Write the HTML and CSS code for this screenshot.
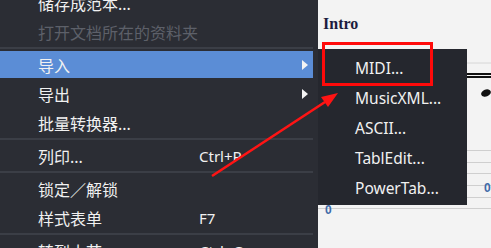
FILE: index.html
```html
<!DOCTYPE html>
<html lang="zh-CN">

<head>
    <meta charset="UTF-8" />
    <meta name="viewport" content="width=device-width, initial-scale=1.0" />
    <title>导入菜单</title>
    <link rel="stylesheet" href="styles.css">
</head>

<body>

    <div class="window">
        <div class="menu">
            <ul class="menu-list">
                <li class="item">储存成范本...</li>
                <li class="item disabled">打开文档所在的资料夹</li>
                <li class="sep"></li>
                <li class="item active"><span>导入</span><span></span><span class="sub-arrow"></span></li>
                <li class="item"><span>导出</span><span></span><span class="sub-arrow"></span></li>
                <li class="item">批量转换器...</li>
                <li class="sep"></li>
                <li class="item"><span>列印...</span><span class="key">Ctrl+P</span></li>
                <li class="sep"></li>
                <li class="item">锁定／解锁</li>
                <li class="item"><span>样式表单</span><span class="key">F7</span></li>
                <li class="sep"></li>
                <li class="item"><span>转到小节...</span><span class="key">Ctrl+G</span></li>
            </ul>
        </div>

        <div class="canvas">
            <div class="title">Intro</div>
            <svg class="staff" width="173" height="202" viewBox="0 0 173 202">
                <line x1="149" y1="17" x2="173" y2="17" stroke="#d6d6d6" stroke-width="1" />
                <line x1="149" y1="28" x2="173" y2="28" stroke="#111" stroke-width="2" />
                <line x1="149" y1="31" x2="173" y2="31" stroke="#111" stroke-width="2" />
                <ellipse cx="168" cy="47" rx="5" ry="3.5" transform="rotate(-20 168 47)" fill="#111" />
                <line x1="0" y1="104.5" x2="173" y2="104.5" stroke="#cfcfcf" />
                <line x1="0" y1="116.5" x2="173" y2="116.5" stroke="#cfcfcf" />
                <line x1="0" y1="127.5" x2="173" y2="127.5" stroke="#cfcfcf" />
                <line x1="0" y1="139.5" x2="173" y2="139.5" stroke="#cfcfcf" />
                <line x1="0" y1="151.5" x2="173" y2="151.5" stroke="#cfcfcf" />
                <line x1="0" y1="162.5" x2="173" y2="162.5" stroke="#cfcfcf" />
                <text x="7" y="168" class="fret">0</text>
                <text x="166" y="146" class="fret">0</text>
            </svg>
        </div>

        <ul class="submenu">
            <li>MIDI...</li>
            <li>MusicXML...</li>
            <li>ASCII...</li>
            <li>TablEdit...</li>
            <li>PowerTab...</li>
        </ul>

        <div class="callout"></div>

        <svg class="pointer" width="491" height="248" viewBox="0 0 491 248">
            <line x1="212" y1="176" x2="325" y2="102" stroke="#ff1414" stroke-width="2.6" />
            <polygon points="338,93 328,107 321,97" fill="#ff1414" />
        </svg>
    </div>

</body>

</html>
```

FILE: styles.css
```css
* {
    box-sizing: border-box;
}

body {
    margin: 0;
    font-family: 'Noto Sans', 'Noto Sans CJK SC', sans-serif;
    background-color: #2b2d34;
}

.window {
    position: relative;
    display: flex;
    width: 491px;
    height: 248px;
    overflow: hidden;
}

.menu {
    width: 318px;
    flex-shrink: 0;
    background-color: #2b2d34;
}

.menu-list {
    list-style: none;
    margin: -11px 0 0;
    padding: 0;
    width: 313px;
}

.item {
    display: grid;
    grid-template-columns: 161px 1fr auto;
    align-items: center;
    height: 27px;
    margin-bottom: 2px;
    padding: 0 5px 0 38px;
    color: #f1f1f1;
    font-size: 16px;
    white-space: nowrap;
}

.item.active {
    background-color: #5b8dd6;
}

.item.disabled {
    color: #5d6069;
}

.key {
    font-size: 15px;
}

.sub-arrow {
    width: 0;
    height: 0;
    border-top: 5px solid transparent;
    border-bottom: 5px solid transparent;
    border-left: 6px solid #f4f4f4;
}

.sep {
    height: 4px;
    border-top: 2px solid #3b3e46;
    margin-top: 1px;
}

.sep + .item.active {
    margin-top: 0;
}

.canvas {
    flex: 1;
    background-color: #f3f3f3;
}

.title {
    padding: 14px 0 12px 5px;
    height: 46px;
    line-height: 20px;
    font-family: 'Liberation Serif', serif;
    font-weight: bold;
    font-size: 16px;
    color: #1c1c3e;
}

.staff {
    display: block;
}

.fret {
    font-family: 'Liberation Sans', sans-serif;
    font-size: 12px;
    font-weight: bold;
    fill: #3f6aa8;
}

.submenu {
    position: absolute;
    left: 318px;
    top: 49px;
    width: 149px;
    height: 156px;
    margin: 0;
    padding: 4px 0 0;
    list-style: none;
    background-color: #25272e;
}

.submenu li {
    height: 30px;
    line-height: 30px;
    padding-left: 37px;
    color: #f1f1f1;
    font-size: 15.5px;
}

.callout {
    position: absolute;
    left: 322px;
    top: 42px;
    width: 111px;
    height: 44px;
    border: 3px solid #ff0a0a;
}

.pointer {
    position: absolute;
    left: 0;
    top: 0;
}
```
